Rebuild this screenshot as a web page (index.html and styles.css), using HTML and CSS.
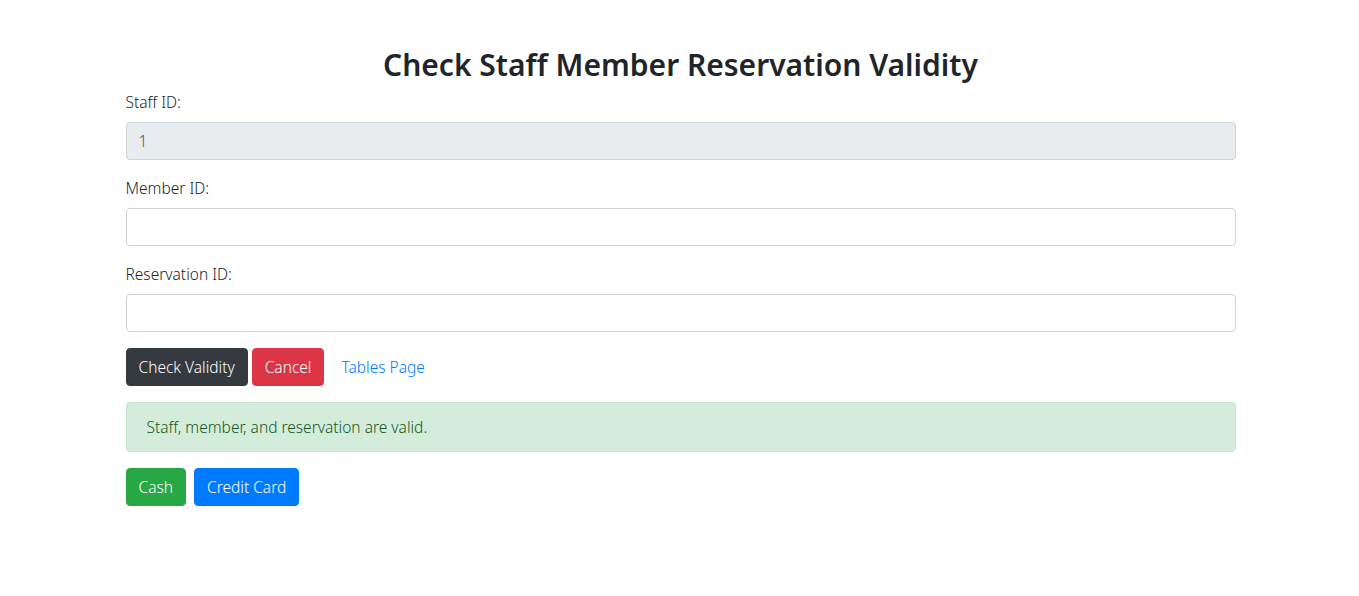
FILE: index.html
```html
<!DOCTYPE html>
<html>
<head>
<meta charset="utf-8">
<link rel="stylesheet" href="styles.css">
</head>
<body>
<div class="container">
  <h2 class="title">Check Staff Member Reservation Validity</h2>
  <form class="form">
    <div class="group">
      <label class="label">Staff ID:</label>
      <div class="input disabled">1</div>
    </div>
    <div class="group">
      <label class="label">Member ID:</label>
      <div class="input"></div>
    </div>
    <div class="group">
      <label class="label">Reservation ID:</label>
      <div class="input"></div>
    </div>
    <div class="actions">
      <span class="btn btn-dark">Check Validity</span>
      <span class="btn btn-danger">Cancel</span>
      <span class="btn btn-link">Tables Page</span>
    </div>
  </form>
  <div class="alert">Staff, member, and reservation are valid.</div>
  <div class="pay">
    <span class="btn btn-success">Cash</span>
    <span class="btn btn-primary">Credit Card</span>
  </div>
</div>
</body>
</html>
```

FILE: styles.css
```css
* { box-sizing: border-box; }
body {
  margin: 0;
  font-family: "Noto Sans", "Open Sans", sans-serif;
  font-size: 15.5px;
  font-weight: 300;
  line-height: 24px;
  color: #212529;
  background: #fff;
}
.container {
  max-width: 1140px;
  margin: 0 auto;
  padding: 46px 14px 0 16px;
}
.title {
  margin: 0 0 6px;
  text-align: center;
  font-size: 30px;
  font-weight: 600;
  line-height: 38px;
}
.group { margin-bottom: 16px; }
.label {
  display: block;
  margin-bottom: 8px;
}
.input {
  height: 38px;
  padding: 6px 12px;
  border: 1px solid #ced4da;
  border-radius: 4px;
  background: #fff;
  color: #495057;
}
.input.disabled { background: #e9ecef; }
.actions, .pay {
  display: flex;
  gap: 4px;
}
.pay { gap: 8px; }
.btn {
  display: inline-block;
  height: 38px;
  padding: 6px 12px;
  border: 1px solid transparent;
  border-radius: 4px;
  color: #fff;
  line-height: 24px;
}
.btn-dark { background: #343a40; border-color: #343a40; }
.btn-danger { background: #dc3545; border-color: #dc3545; }
.btn-link { color: #007bff; background: transparent; }
.btn-success { background: #28a745; border-color: #28a745; }
.btn-primary { background: #007bff; border-color: #007bff; }
.alert {
  margin: 16px 0;
  padding: 12px 20px;
  border: 1px solid #c3e6cb;
  border-radius: 4px;
  background: #d4edda;
  color: #155724;
}
```
